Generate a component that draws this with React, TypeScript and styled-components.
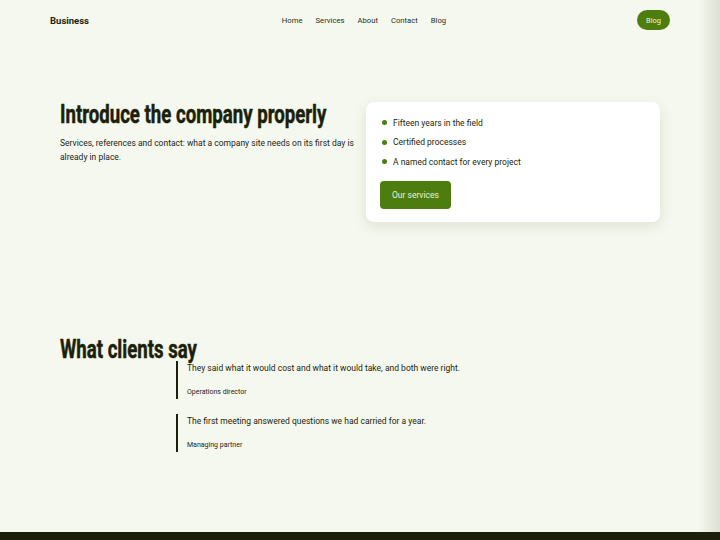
import React from 'react';
import styled, { createGlobalStyle } from 'styled-components';

const Global = createGlobalStyle`
    html, body {
        margin: 0;
        padding: 0;
    }
    body {
        background: linear-gradient(to right, #f5f8ee calc(100% - 22px), #dde0d3);
        color: #1c1f0a;
        font-family: Roboto, 'Liberation Sans', sans-serif;
        min-height: 540px;
    }
`;

const Page = styled.div`
    min-height: 540px;
    display: flex;
    flex-direction: column;
`;

const Header = styled.header`
    height: 40px;
    padding: 0 50px;
    display: grid;
    grid-template-columns: 1fr auto 1fr;
    align-items: center;
`;
const Logo = styled.div`
    font-weight: 700;
    font-size: 9.5px;
`;
const Nav = styled.nav`
    display: flex;
    gap: 13px;
    font-size: 7.7px;
    color: #2c3020;
    margin-left: 8px;
`;
const NavLink = styled.a`
    text-decoration: none;
    color: inherit;
`;
const Pill = styled.a`
    justify-self: end;
    background: #4d7c0f;
    color: #ecf5dc;
    font-size: 7.5px;
    border-radius: 12px;
    padding: 0 9px;
    height: 20px;
    display: flex;
    align-items: center;
    text-decoration: none;
`;

const Hero = styled.section`
    margin: 62px 60px 0;
    display: grid;
    grid-template-columns: minmax(0, 1fr) minmax(0, 1fr);
    gap: 12px;
    align-items: start;
`;
const Title = styled.h1`
    font-family: Roboto, 'Liberation Sans', sans-serif;
    font-weight: 700;
    font-size: 25px;
    line-height: 26px;
    margin: 0 0 8px;
    white-space: nowrap;
    transform: scaleX(0.745);
    transform-origin: left center;
    -webkit-text-stroke: 0.5px currentColor;
`;
const Lead = styled.p`
    font-size: 8.5px;
    line-height: 14px;
    margin: 0;
    color: #22261a;
`;
const Card = styled.div`
    background: #fff;
    border-radius: 8px;
    box-shadow: 0 4px 14px rgba(60, 70, 30, 0.12);
    padding: 11px 14px 13px;
    display: flex;
    flex-direction: column;
    align-items: flex-start;
`;
const List = styled.ul`
    list-style: none;
    margin: 0 0 9.5px;
    padding: 0;
`;
const Item = styled.li`
    display: flex;
    align-items: center;
    font-size: 8.5px;
    height: 19.5px;
    &::before {
        content: '';
        width: 5px;
        height: 5px;
        border-radius: 50%;
        background: #4d7c0f;
        margin: 0 6px 0 2px;
    }
`;
const Button = styled.a`
    display: flex;
    align-items: center;
    height: 28px;
    padding: 0 12px;
    background: #4d7c0f;
    color: #eaf4da;
    border-radius: 4px;
    font-size: 8.5px;
    text-decoration: none;
`;

const Clients = styled.section`
    margin: 115px 60px 0;
`;
const Quotes = styled.div`
    padding-left: 116px;
    display: flex;
    flex-direction: column;
    gap: 15px;
    margin-top: -10px;
`;
const Quote = styled.blockquote`
    margin: 0;
    border-left: 2px solid #1c1f0a;
    padding: 1px 0 0 9px;
    height: 37px;
    display: flex;
    flex-direction: column;
    justify-content: space-between;
`;
const QuoteText = styled.p`
    margin: 0;
    font-size: 8.5px;
    line-height: 12px;
`;
const Author = styled.cite`
    font-style: normal;
    font-size: 7px;
    line-height: 12px;
    color: #22261a;
    padding-bottom: 1px;
`;

const Footer = styled.footer`
    margin-top: auto;
    height: 8px;
    background: #1c1f0a;
`;

const quotes = [
    {
        text: 'They said what it would cost and what it would take, and both were right.',
        who: 'Operations director',
    },
    {
        text: 'The first meeting answered questions we had carried for a year.',
        who: 'Managing partner',
    },
];

export default function App() {
    return (
        <Page>
            <Global />
            <Header>
                <Logo>Business</Logo>
                <Nav>
                    <NavLink href="#">Home</NavLink>
                    <NavLink href="#">Services</NavLink>
                    <NavLink href="#">About</NavLink>
                    <NavLink href="#">Contact</NavLink>
                    <NavLink href="#">Blog</NavLink>
                </Nav>
                <Pill href="#">Blog</Pill>
            </Header>
            <Hero>
                <div>
                    <Title>Introduce the company properly</Title>
                    <Lead>
                        Services, references and contact: what a company site needs on its first day
                        is already in place.
                    </Lead>
                </div>
                <Card>
                    <List>
                        <Item>Fifteen years in the field</Item>
                        <Item>Certified processes</Item>
                        <Item>A named contact for every project</Item>
                    </List>
                    <Button href="#">Our services</Button>
                </Card>
            </Hero>
            <Clients>
                <Title as="h2">What clients say</Title>
                <Quotes>
                    {quotes.map((q) => (
                        <Quote key={q.who}>
                            <QuoteText>{q.text}</QuoteText>
                            <Author>{q.who}</Author>
                        </Quote>
                    ))}
                </Quotes>
            </Clients>
            <Footer />
        </Page>
    );
}
